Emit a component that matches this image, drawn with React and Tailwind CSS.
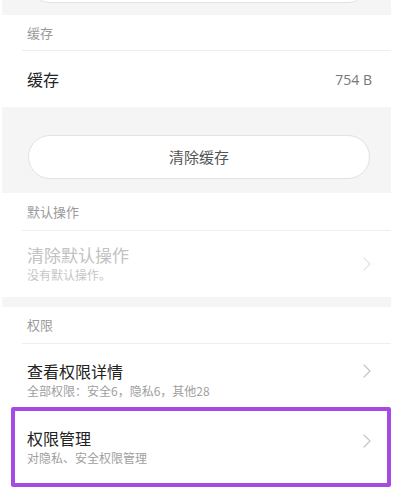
import React from "react";

const font = { fontFamily: '"Noto Sans CJK SC", "Noto Sans", sans-serif' };

function Chevron({ light }) {
  return (
    <svg width="8" height="14" viewBox="0 0 8 14" fill="none" className="shrink-0">
      <polyline
        points="1,1 7,7 1,13"
        stroke={light ? "#e3e3e3" : "#c4c4c4"}
        strokeWidth="1.2"
        strokeLinecap="round"
        strokeLinejoin="round"
      />
    </svg>
  );
}

function Header({ children, h }) {
  return (
    <div className={`flex items-center pl-[25px] text-[13px] text-[#9a9a9a] ${h}`}>
      {children}
    </div>
  );
}

function Divider() {
  return <div className="ml-[20px] h-px bg-[#eeeeee]" />;
}

export default function App() {
  return (
    <div className="w-[400px] h-[493px] bg-white overflow-hidden" style={font}>
      <div className="ml-[2px] w-[389px]">
        {/* top gray band with previous button bottom */}
        <div className="h-[15px] bg-[#f5f5f5] overflow-hidden pl-[26px] pr-[21px]">
          <div className="-mt-[41px] h-[44px] rounded-full bg-white border border-[#e2e2e2]" />
        </div>

        {/* cache section */}
        <div className="bg-white">
          <Header h="h-[35px]">缓存</Header>
          <Divider />
          <div className="h-[56px] flex items-center justify-between pl-[25px] pr-[19px]">
            <span className="text-[16px] text-[#222222]">缓存</span>
            <span className="text-[14px] text-[#777777]" style={{ fontFamily: '"Open Sans", "Noto Sans", sans-serif' }}>754 B</span>
          </div>
        </div>

        {/* clear cache button area */}
        <div className="h-[86px] bg-[#f5f5f5] pt-[28px] pl-[26px] pr-[21px]">
          <div className="w-full h-[44px] rounded-full bg-white border border-[#e2e2e2] flex items-center justify-center text-[15px] text-[#555555]">
            清除缓存
          </div>
        </div>

        {/* default actions */}
        <div className="bg-white">
          <Header h="h-[37px]">默认操作</Header>
          <Divider />
          <div className="h-[66px] flex items-center justify-between pl-[25px] pr-[20px]">
            <div className="flex flex-col">
              <span className="text-[17px] leading-[22px] text-[#c2c2c2]">清除默认操作</span>
              <span className="text-[12px] leading-[18px] text-[#c6c6c6]">没有默认操作。</span>
            </div>
            <Chevron light />
          </div>
        </div>

        <div className="h-[10px] bg-[#f5f5f5]" />

        {/* permissions */}
        <div className="bg-white">
          <Header h="h-[36px]">权限</Header>
          <Divider />
          <div className="h-[63px] flex items-start justify-between pl-[25px] pr-[20px] pt-[16px]">
            <div className="flex flex-col">
              <span className="text-[16px] leading-[22px] text-[#222222]">查看权限详情</span>
              <span className="text-[12px] leading-[18px] text-[#a0a0a0]">全部权限：安全6，隐私6，其他28</span>
            </div>
            <div className="pt-[4px]">
              <Chevron />
            </div>
          </div>
          <div className="relative h-[80px] flex items-center justify-between pl-[25px] pr-[20px]">
            <div className="flex flex-col">
              <span className="text-[16px] leading-[22px] text-[#222222]">权限管理</span>
              <span className="text-[12px] leading-[18px] text-[#a0a0a0]">对隐私、安全权限管理</span>
            </div>
            <div className="-mt-[12px]">
              <Chevron />
            </div>
            <div className="absolute left-[9px] right-0 top-0 bottom-0 border-4 border-[#a64ae6] rounded-[2px] pointer-events-none" />
          </div>
        </div>
      </div>
    </div>
  );
}
